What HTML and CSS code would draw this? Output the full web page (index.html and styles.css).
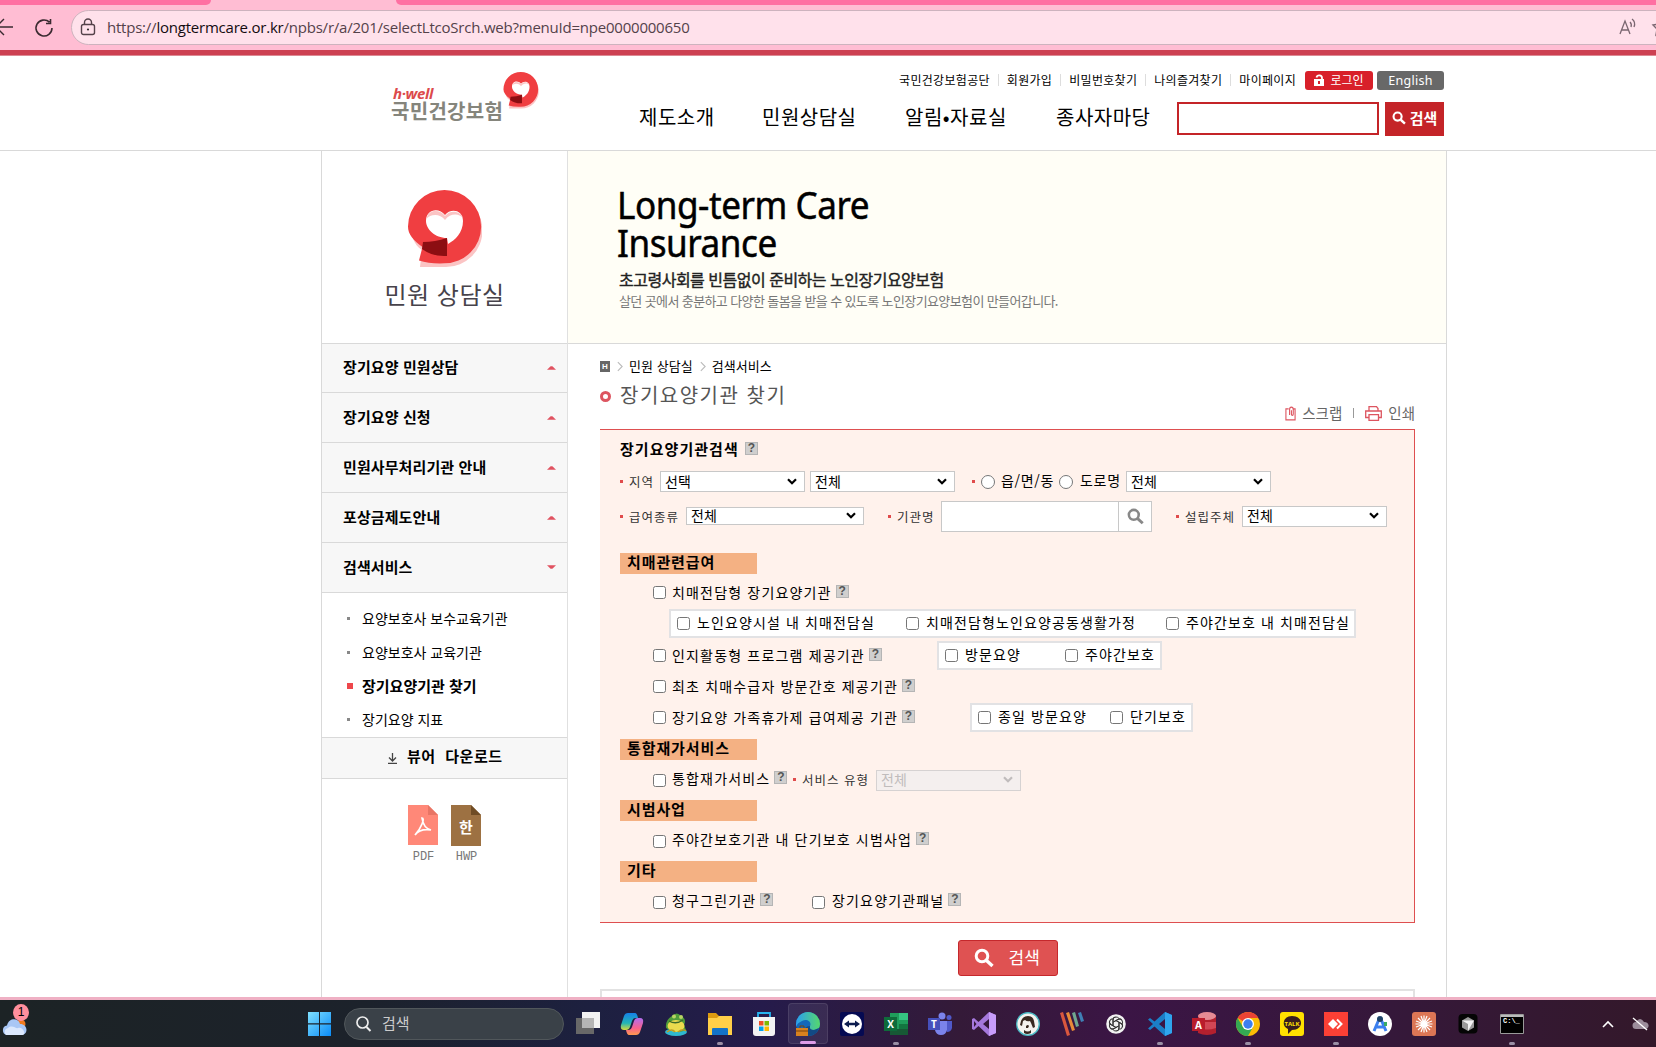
FILE: index.html
```html
<!DOCTYPE html>
<html lang="ko">
<head>
<meta charset="utf-8">
<title>장기요양기관 찾기</title>
<link rel="stylesheet" href="styles.css">
</head>
<body>
<svg class="defs" width="0" height="0">
  <symbol id="hwell" viewBox="0 0 74 78">
    <path d="M38 4a36 36 0 0 1 0 73H12l2-17C5 54 4 46 4 40A36 36 0 0 1 38 4Z" fill="#fbc4c4"/>
    <path d="M36.500 0a36.500 36.500 0 0 1 0 73.300Q22 74 11 70.500L14.500 57C5 50 0 44 0 36.500A36.500 36.500 0 0 1 36.500 0Z" fill="#f03e41"/>
    <path d="M37 25c5-7 18-6 18 6 0 12-8 19-15 23l-1-6C27 48 18 39 18 31c0-12 13-14 19-6Z" fill="#fff"/>
    <path d="M18.500 29C20 19 32 19 37 26c5-7 16-5 18 2-4-5-13-5-18 2-5-7-15-6-18.500-1Z" fill="#fbc4c4"/>
    <path d="M15 52q12 0 24-4v18q-14 1-25-7Z" fill="#8c0e12"/>
  </symbol>
  <symbol id="glass" viewBox="0 0 20 20"><circle cx="8" cy="8" r="5.800" fill="none" stroke="currentColor" stroke-width="3"/><path d="m12.500 12.500 6 5.500" stroke="currentColor" stroke-width="3.400"/></symbol>
  <symbol id="up" viewBox="0 0 10 5"><path d="M0 5 4 1h2l4 4Z" fill="#e05260"/></symbol>
  <symbol id="down" viewBox="0 0 10 5"><path d="M0 0h10L6 4H4Z" fill="#e05260"/></symbol>
  <symbol id="sep" viewBox="0 0 7 12"><path d="m1 1 5 5-5 5" fill="none" stroke="#bbb" stroke-width="1.300"/></symbol>
  <symbol id="chev" viewBox="0 0 10 7"><path d="m1 1.200 4 4 4-4" fill="none" stroke="currentColor" stroke-width="2.200"/></symbol>
</svg>

<div class="browser">
  <div class="tabs"><i class="tab-left"></i><i class="tab-right"></i></div>
  <div class="toolbar">
    <svg class="back" width="14" height="20" viewBox="0 0 14 20"><path d="M13 10H-6M4 2l-8 8 8 8" fill="none" stroke="#3a2a30" stroke-width="1.400"/></svg>
    <svg class="reload" width="20" height="20" viewBox="0 0 20 20"><path d="M18 10a8 8 0 1 1-2.500-5.800M16.500 1v4.500H12" fill="none" stroke="#3a2a30" stroke-width="1.600"/></svg>
    <div class="address">
      <svg class="lock" width="16" height="18" viewBox="0 0 16 18"><rect x="1.500" y="6.500" width="13" height="10" rx="2" fill="none" stroke="#54424a" stroke-width="1.400"/><path d="M4.500 6V4.500a3.500 3.500 0 0 1 7 0V6" fill="none" stroke="#54424a" stroke-width="1.400"/><circle cx="8" cy="11.500" r="1.100" fill="#333"/></svg>
      <span class="url">https://<b>longtermcare.or.kr</b>/npbs/r/a/201/selectLtcoSrch.web?menuId=npe0000000650</span>
      <svg class="aloud" width="18" height="18" viewBox="0 0 18 18"><path d="M1 16 6 3l5 13M2.500 12h7M11 4q2 2 1 5M13 1q4 3 2 8" fill="none" stroke="#7a6670" stroke-width="1.300"/></svg>
      <svg class="star" width="16" height="18" viewBox="0 0 16 18"><path d="m9 1 2.500 5 5.500 1-4 4 1 6-5-3-5 3 1-6-4-4 5.500-1Z" fill="none" stroke="#7a6670" stroke-width="1.400"/></svg>
    </div>
  </div>
</div>

<div class="topline"></div>
<header class="header">
  <div class="header-inner">
    <div class="logo">
      <div class="logo-text"><em>h·well</em><strong>국민건강보험</strong></div>
      <svg width="36" height="37"><use href="#hwell"/></svg>
    </div>
    <div class="header-right">
      <div class="util">
        <a>국민건강보험공단</a><a>회원가입</a><a>비밀번호찾기</a><a>나의즐겨찾기</a><a>마이페이지</a>
        <span class="login"><svg width="10" height="12" viewBox="0 0 10 12"><path d="M0 5h10v7H0Z" fill="#fff"/><path d="M2.500 3.500C3 .5 8 .5 8 4v2" fill="none" stroke="#fff" stroke-width="1.800"/><path d="M4 7h2v3H4z" fill="#d8202a"/></svg>로그인</span>
        <span class="english">English</span>
      </div>
      <div class="gnb">
        <a>제도소개</a><a>민원상담실</a><a>알림•자료실</a><a>종사자마당</a>
        <div class="gsearch"></div>
        <div class="gbutton"><svg width="14" height="14"><use href="#glass"/></svg>검색</div>
      </div>
    </div>
  </div>
</header>

<div class="page">
  <aside class="side">
    <div class="side-head"><svg width="74" height="78"><use href="#hwell"/></svg><h2>민원 상담실</h2></div>
    <ul class="menu">
      <li>장기요양 민원상담<svg width="9" height="5"><use href="#up"/></svg></li>
      <li>장기요양 신청<svg width="9" height="5"><use href="#up"/></svg></li>
      <li>민원사무처리기관 안내<svg width="9" height="5"><use href="#up"/></svg></li>
      <li>포상금제도안내<svg width="9" height="5"><use href="#up"/></svg></li>
      <li>검색서비스<svg width="9" height="5"><use href="#down"/></svg></li>
    </ul>
    <ul class="submenu">
      <li>요양보호사 보수교육기관</li><li>요양보호사 교육기관</li><li class="on">장기요양기관 찾기</li><li>장기요양 지표</li>
    </ul>
    <div class="viewer"><svg width="9" height="11" viewBox="0 0 9 11"><path d="M4.500 0v8M1 4.500l3.500 3.500L8 4.500M0 10.300h9" fill="none" stroke="#444" stroke-width="1.300"/></svg>뷰어 다운로드</div>
    <div class="files">
      <div><svg width="31" height="41" viewBox="0 0 31 41"><path d="M0 0h20l10 10v30H0Z" fill="#ff8878"/><path d="M20 0v10h10Z" fill="#e87565"/><path d="M14 13c3 0 0 9-7 17 3-4 9-6 16-5-4-1-8-5-9-12Z" fill="none" stroke="#fff" stroke-width="1.700"/></svg>PDF</div>
      <div><svg width="31" height="41" viewBox="0 0 31 41"><path d="M0 0h20l10 10v31H0Z" fill="#9d7142"/><path d="M20 0v10h10Z" fill="#6f4c25"/><text x="15" y="28" text-anchor="middle" class="han">한</text></svg>HWP</div>
    </div>
  </aside>

  <main class="main">
    <section class="banner">
      <h1>Long-term Care<br>Insurance</h1>
      <p class="lead">초고령사회를 빈틈없이 준비하는 노인장기요양보험</p>
      <p class="desc">살던 곳에서 충분하고 다양한 돌봄을 받을 수 있도록 노인장기요양보험이 만들어갑니다.</p>
    </section>
    <div class="content">
      <nav class="crumbs"><i class="home">H</i><svg width="6" height="11"><use href="#sep"/></svg><span>민원 상담실</span><svg width="6" height="11"><use href="#sep"/></svg><span>검색서비스</span></nav>
      <h3 class="title">장기요양기관 찾기</h3>
      <div class="tools">
        <svg width="11" height="15" viewBox="0 0 12 15"><path d="M4 2.500H1v12h10v-12H9.500M5 9V3q0-2.500 2-2.500T9 3v5q0 1.500-1 1.500T7 8V4" fill="none" stroke="#dd5560" stroke-width="1.200"/></svg><span>스크랩</span><i></i>
        <svg width="17" height="15" viewBox="0 0 17 15"><path d="M4 5V.7h7.500L13 2.500V5M3.500 11.500H.7V5h15.600v6.500h-2.800M4 8.700h9.500v5.600H4Z" fill="none" stroke="#dd5560" stroke-width="1.300"/></svg><span>인쇄</span>
      </div>

      <form class="panel">
        <div class="panel-title">장기요양기관검색<i class="q">?</i></div>
        <div class="line line-region">
          <label class="key">지역</label><div class="select">선택<svg width="10" height="7"><use href="#chev"/></svg></div><div class="select">전체<svg width="10" height="7"><use href="#chev"/></svg></div>
          <label class="key"></label><input type="radio"><span>읍/면/동</span><input type="radio"><span>도로명</span><div class="select">전체<svg width="10" height="7"><use href="#chev"/></svg></div>
        </div>
        <div class="line line-kind">
          <label class="key">급여종류</label><div class="select low">전체<svg width="10" height="7"><use href="#chev"/></svg></div>
          <label class="key">기관명</label><div class="name-input"><i></i><svg width="17" height="17"><use href="#glass"/></svg></div>
          <label class="key">설립주체</label><div class="select">전체<svg width="10" height="7"><use href="#chev"/></svg></div>
        </div>

        <h4 class="first">치매관련급여</h4>
        <div class="opt opt-a"><input type="checkbox"><span>치매전담형 장기요양기관<i class="q">?</i></span></div>
        <div class="box box-a">
          <input type="checkbox"><span>노인요양시설 내 치매전담실</span><input type="checkbox"><span>치매전담형노인요양공동생활가정</span><input type="checkbox"><span>주야간보호 내 치매전담실</span>
        </div>
        <div class="opt opt-b"><input type="checkbox"><span>인지활동형 프로그램 제공기관<i class="q">?</i></span>
          <div class="box box-b"><input type="checkbox"><span>방문요양</span><input type="checkbox"><span>주야간보호</span></div></div>
        <div class="opt"><input type="checkbox"><span>최초 치매수급자 방문간호 제공기관<i class="q">?</i></span></div>
        <div class="opt opt-c"><input type="checkbox"><span>장기요양 가족휴가제 급여제공 기관<i class="q">?</i></span>
          <div class="box box-c"><input type="checkbox"><span>종일 방문요양</span><input type="checkbox"><span>단기보호</span></div></div>

        <h4 class="second">통합재가서비스</h4>
        <div class="opt tall opt-d"><input type="checkbox"><span>통합재가서비스<i class="q">?</i></span><label class="key">서비스 유형</label><div class="select disabled">전체<svg width="10" height="7"><use href="#chev"/></svg></div></div>
        <h4>시범사업</h4>
        <div class="opt tall"><input type="checkbox"><span>주야간보호기관 내 단기보호 시범사업<i class="q">?</i></span></div>
        <h4>기타</h4>
        <div class="opt tall opt-e"><input type="checkbox"><span>청구그린기관<i class="q">?</i></span><input type="checkbox"><span>장기요양기관패널<i class="q">?</i></span></div>
      </form>

      <div class="submit"><svg width="20" height="20"><use href="#glass"/></svg>검색</div>
      <div class="results"></div>
    </div>
  </main>
</div>

<footer class="taskbar">
  <div class="weather"><svg width="25" height="17" viewBox="0 0 25 17"><circle cx="19" cy="5" r="4.500" fill="#f07a1c"/><path d="M5 16a4.800 4.800 0 0 1 0-9.500C7-2 17-1 18 5c8 0 9 11 1 11Z" fill="#a9c7f5"/><path d="M4 16a4 4 0 0 1 2-7c4-4 8 1 10 0 5-2 9 7 4 7Z" fill="#dbe8fd"/></svg><b>1</b></div>
  <svg class="win" width="23" height="24" viewBox="0 0 23 24"><linearGradient id="wg" x2="1" y2="1"><stop stop-color="#7fe0ff"/><stop offset="1" stop-color="#0a8cf8"/></linearGradient><path d="M0 0h11v11.300H0ZM12 0h11v11.300H12ZM0 12.400h11V24H0ZM12 12.400h11V24H12Z" fill="url(#wg)"/></svg>
  <div class="tsearch"><svg width="15" height="16" viewBox="0 0 15 16"><circle cx="6.500" cy="6.500" r="5.500" fill="none" stroke="#eee" stroke-width="1.700"/><path d="m10.500 11 4 4" stroke="#eee" stroke-width="2"/></svg><span>검색</span></div>
  <div class="apps">
    <span><svg viewBox="0 0 24 24"><path d="M6 0h18v16H6Z" fill="#f2f2f2"/><path d="M0 6h18v16H0Z" fill="#686868"/><path d="M6 6h12v10H6Z" fill="#b5b5b5"/></svg></span>
    <span><svg viewBox="0 0 24 24"><linearGradient id="c1" y2="1" x2="0"><stop stop-color="#1581e8"/><stop offset=".6" stop-color="#23b5b5"/><stop offset="1" stop-color="#d9d93b"/></linearGradient><linearGradient id="c2" x2="0" y2="1"><stop stop-color="#b06df0"/><stop offset=".6" stop-color="#f8618c"/><stop offset="1" stop-color="#ff9a4d"/></linearGradient><path d="M8 1h7q2 0 3 5h-3q-2 0-3 3l-2 6q-1 3-4 3H4q-4 0-3-5L4 4q1-3 4-3Z" fill="url(#c1)"/><path d="M16 23H9q-2 0-3-5h3q2 0 3-3l2-6q1-3 4-3h2q4 0 3 5l-3 9q-1 3-4 3Z" fill="url(#c2)"/></svg></span>
    <span><svg viewBox="0 0 24 24"><ellipse cx="12" cy="20" rx="11" ry="4" fill="#2fb8d0"/><path d="M2 16q-1-8 6-12 5-5 9 0 6 3 3 9l2 5q-10 5-20-2Z" fill="#4f9c3a"/><ellipse cx="12" cy="14" rx="8.500" ry="6" fill="#eadb4e"/><path d="M5 9q7 4 14-1" fill="none" stroke="#3b6a28" stroke-width="1.300"/><circle cx="10" cy="4.500" r="2" fill="#b8d564"/><circle cx="17" cy="5" r="2" fill="#b8d564"/><path d="M3 20q5-4 8 0M14 20q5-4 8-1" fill="none" stroke="#bb9c26" stroke-width="1.500"/></svg></span>
    <span class="run"><svg viewBox="0 0 24 24"><path d="M0 1h8l3 3h12v7H0Z" fill="#dd9b10"/><path d="M0 6h9l2-2h13v19H0Z" fill="#ffcf48"/><path d="M4 23v-6q0-1 1-1h14q1 0 1 1v6Z" fill="#1473c8"/></svg></span>
    <span><svg viewBox="0 0 24 24"><path d="M6 6V1h12v5" fill="none" stroke="#25b4f0" stroke-width="1.800"/><path d="M1 5h22v16q0 3-3 3H4q-3 0-3-3Z" fill="#f3f3f3"/><path d="M7 9h4.500v4.500H7Z" fill="#f04f24"/><path d="M12.500 9H17v4.500h-4.500Z" fill="#7fba00"/><path d="M7 14.500h4.500V19H7Z" fill="#00a2ed"/><path d="M12.500 14.500H17V19h-4.500Z" fill="#ffb900"/></svg></span>
    <span class="active"><svg viewBox="0 0 24 24"><linearGradient id="eg"><stop stop-color="#2b9ef0"/><stop offset="1" stop-color="#55d86c"/></linearGradient><circle cx="12" cy="12" r="12" fill="#1468b8"/><path d="M0 12a12 12 0 0 1 24 0q0 6-7 6c-3 0-4-2-3-4 2-4-3-8-8-5Q1 11 0 15Z" fill="url(#eg)"/><path d="M14 14q-1 4 4 4l5-2q-3 8-11 8Q3 16 14 14Z" fill="#124a84"/><path d="M0 16h12v8H0Z" fill="#d8821e"/><path d="M0 19h12M4 16v-2h4v2" stroke="#7b420a" fill="none"/></svg></span>
    <span><svg viewBox="0 0 24 24"><rect width="24" height="24" rx="2" fill="#050a52"/><circle cx="12" cy="12" r="10" fill="#fff"/><path d="m4 12 5-3.500v2.300h6V8.500L20 12l-5 3.500v-2.300H9v2.300Z" fill="#0b1b4e"/></svg></span>
    <span class="run"><svg viewBox="0 0 24 24"><path d="M6 1h18v22H6Z" fill="#1f9d5b"/><path d="M15 1h9v7h-9Z" fill="#35c481"/><path d="M15 12h9v5h-9Z" fill="#137540"/><path d="M6 17h18v6H6Z" fill="#175935"/><path d="M0 5h13v14H0Z" fill="#0e6b3a"/><text x="6.500" y="16" class="ltr">X</text></svg></span>
    <span><svg viewBox="0 0 24 24"><circle cx="14" cy="4" r="3.500" fill="#7b83eb"/><circle cx="21" cy="5.500" r="2.500" fill="#5059c9"/><path d="M7 9h12v9q-1 5-6 5t-6-5Z" fill="#7b83eb"/><path d="M19 9h5v7q-1 4-5 4Z" fill="#5059c9"/><path d="M0 6h12v12H0Z" fill="#4650bb"/><text x="6" y="16" class="ltr">T</text></svg></span>
    <span><svg viewBox="0 0 24 24"><path fill-rule="evenodd" d="m17 0 7 3v18l-7 3L6.500 14 2 18l-2-1V7l2-1 4.500 4ZM17 7l-6 5 6 5ZM2 9v6l2.500-3Z" fill="#a578dc"/><path d="M17 0v24l7-3V3Z" fill="#c79cfa"/></svg></span>
    <span><svg viewBox="0 0 24 24"><circle cx="12" cy="12" r="11.300" fill="#f5f2ee" stroke="#4bb9c4" stroke-width="1.400"/><path d="M5 9q2-5 7-5 5 0 6 5l1 6-2 1-2-5-1-2q-3 1-5-1l-2 1-1 5-2-1Z" fill="#382820"/><path d="M10 14q2-2 3 0l-1 2h-2ZM8 18q4 3 7 0v3q-4 2-7 0Z" fill="#382820"/></svg></span>
    <span><svg viewBox="0 0 24 24"><path d="m0 1 3-1 7 23-3 1Z" fill="#da573e"/><path d="m6 1 3-1 6 18-3 1Z" fill="#e98a38"/><path d="m12 1 3-1 4 14-3 1Z" fill="#6fa78f"/><path d="m18 1 3-1 3 9-3 1Z" fill="#3f80b5"/></svg></span>
    <span><svg viewBox="0 0 24 24"><circle cx="12" cy="12" r="9.800" fill="#f1f1f1"/><g fill="none" stroke="#333" stroke-width="1"><path id="k" d="M9 13.500V8q0-3 3-3 2 0 3 1.500M9.500 10l4.500-2.600q2.300-1.200 3.700.6"/><use href="#k" transform="rotate(60 12 12)"/><use href="#k" transform="rotate(120 12 12)"/><use href="#k" transform="rotate(180 12 12)"/><use href="#k" transform="rotate(240 12 12)"/><use href="#k" transform="rotate(300 12 12)"/></g></svg></span>
    <span class="run"><svg viewBox="0 0 24 24"><path fill-rule="evenodd" d="m17 0 7 3v18l-7 3L6.500 14.500 2 18l-2-1.500L5 12 0 7.500 2 6l4.500 3.500ZM17 7l-6 5 6 5Z" fill="#1b7fc7"/><path d="m17 0 7 3v18l-7 3Z" fill="#2fa5ee"/></svg></span>
    <span><svg viewBox="0 0 24 24"><path d="M6 3v18q9 4 18 0V3Z" fill="#b3202e"/><path d="M6 10h18v6q-9 3-18 0Z" fill="#d14655"/><ellipse cx="15" cy="4" rx="9" ry="4" fill="#e58a94"/><path d="M0 6h13v13H0Z" fill="#b91c2c"/><text x="6.500" y="16.500" class="ltr">A</text></svg></span>
    <span class="run"><svg viewBox="0 0 24 24"><circle cx="12" cy="12" r="12" fill="#fbbc05"/><path d="M1.600 6A12 12 0 0 1 22.400 6H12v6Z" fill="#ea4335"/><path d="M1.600 6A12 12 0 0 0 12 24l5-9H7Z" fill="#34a853"/><circle cx="12" cy="12" r="6" fill="#fff"/><circle cx="12" cy="12" r="4.700" fill="#3c7ff0"/></svg></span>
    <span><svg viewBox="0 0 24 24"><rect width="24" height="24" rx="3" fill="#ffe100"/><path d="M12 4c12 0 12 14 0 14l-4 4V17C1 14 3 4 12 4Z" fill="#371d1e"/><text x="12" y="13.500" class="talk">TALK</text></svg></span>
    <span class="run"><svg viewBox="0 0 24 24"><path d="M0 0h24v24H0Z" fill="#fb4035"/><path d="m9 7 5 5-5 5-5-5Z" fill="#fff"/><path d="m13 7.500 4.500 4.500-4.500 4.500" fill="none" stroke="#fff" stroke-width="2"/></svg></span>
    <span><svg viewBox="0 0 24 24"><circle cx="12" cy="12" r="12" fill="#fff"/><path d="m12 5-6 14M12 5l6 14M7 15h10" stroke="#3c80ef" stroke-width="3" fill="none"/><circle cx="12" cy="7" r="3" fill="#1f4467"/><path d="M16 10h3v4h-3Z" fill="#3aab65"/></svg></span>
    <span><svg viewBox="0 0 24 24"><rect width="24" height="24" rx="3" fill="#dc7655"/><path d="M12 3.500v17M3.500 12h17M6 6l12 12M18 6 6 18M9 4l6 16M15 4 9 20M4 9l16 6M4 15l16-6" stroke="#fff" stroke-width="1.200"/></svg></span>
    <span><svg viewBox="0 0 24 24"><rect x="2.500" y="2" width="19" height="19.500" rx="4" fill="#050505"/><path d="m12 5 6 3.500v7L12 19l-6-3.500v-7Z" fill="#9a9a9a"/><path d="M6 8.500h12L12 19v-7Z" fill="#f2f2f2"/></svg></span>
    <span class="run"><svg viewBox="0 0 24 24"><path d="M.5 2.500h23v19H.5Z" fill="#000" stroke="#999"/><path d="M1 3h22v2H1Z" fill="#bbb"/><text x="3" y="11" class="cmd">C:\_</text></svg></span>
  </div>
  <div class="tray"><svg width="12" height="8" viewBox="0 0 12 8"><path d="m1 7 5-5 5 5" fill="none" stroke="#fff" stroke-width="1.600"/></svg><svg width="17" height="14" viewBox="0 0 17 14"><path d="M4 12a3.500 3.500 0 0 1 0-7q4-6 8 0c6 0 6 7 1 7Z" fill="#9c8d9b"/><path d="m1 1 14 12" stroke="#fff" stroke-width="1.300"/></svg></div>
</footer>
</body>
</html>
```

FILE: styles.css
```css
*, *::before { box-sizing: border-box; }
body { margin: 0; width: 1656px; height: 1047px; overflow: hidden; display: flex; flex-direction: column; background: #fff; color: #000; font: 14px/1.2 "Noto Sans CJK KR", sans-serif; }
ul, h1, h2, h3, h4, p { margin: 0; padding: 0; list-style: none; font-weight: normal; }
i, em { font-style: normal; }
svg { display: block; flex: none; overflow: visible; }
.defs { position: absolute; }

/* browser chrome */
.browser { flex: none; height: 50px; background: #ffbdd3; overflow: hidden; }
.tabs { height: 5px; display: flex; justify-content: space-between; }
.tabs i { background: #ff6fa2; height: 5px; }
.tab-left { width: 211px; border-bottom-right-radius: 5px; }
.tab-right { width: 1260px; border-bottom-left-radius: 5px; }
.toolbar { display: flex; align-items: center; height: 45px; }
.back { margin-top: -1px; }
.reload { margin-left: 20px; }
.address { margin: 0 -20px 0 17px; flex: 1; height: 35px; display: flex; align-items: center; border: 1px solid #cdb3be; border-radius: 18px; background: #ffe1eb; padding: 0 0 1px 8px; }
.lock { margin-top: -1px; }
.url { margin-left: 11px; font: 15px/20px "Open Sans", sans-serif; letter-spacing: -0.22px; color: #54424a; white-space: nowrap; }
.url b { font-weight: normal; color: #140c10; }
.aloud { margin-left: auto; }
.star { margin: 0 7px 0 15px; }

/* header */
.topline { flex: none; height: 6px; background: #cd4052; border-bottom: 1px solid #dd8a94; }
.header { flex: none; height: 95px; border-bottom: 1px solid #d9d9d9; }
.header-inner { display: flex; width: 1053px; margin-left: 391px; }
.logo { display: flex; padding-top: 16px; width: 248px; }
.logo-text { width: 112px; padding-top: 13px; display: flex; flex-direction: column; }
.logo-text em { font: italic bold 15px/16px "Open Sans", sans-serif; letter-spacing: -.4px; color: #dc4a4c; padding-left: 2px; }
.logo-text strong { font-size: 20px; line-height: 19px; letter-spacing: 0.3px; color: #85857c; white-space: nowrap; }
.header-right { flex: 1; padding-top: 15px; }
.util { display: flex; justify-content: flex-end; height: 19px; align-items: center; font-size: 12px; white-space: nowrap; }
.util a { padding: 0 8px; letter-spacing: .3px; line-height: 12px; margin-top: -2px; border-left: 1px solid #ddd; }
.util a:first-child { border: 0; }
.login, .english { height: 19px; border-radius: 3px; color: #fff; display: flex; align-items: center; justify-content: center; padding-bottom: 1px; }
.login { width: 68px; background: #d8202a; gap: 6px; margin-left: 1px; }
.english { width: 67px; background: #686868; margin-left: 4px; font: 12.500px "Noto Sans", sans-serif; letter-spacing: .3px; }
.gnb { display: grid; grid-template-columns: 123px 143px 151px 121px 208px 59px; height: 34px; margin-top: 12px; align-items: center; font-size: 20px; white-space: nowrap; }
.gnb a { letter-spacing: .5px; margin-top: -5px; }
.gsearch { height: 33px; width: 202px; border: 2px solid #c42428; align-self: start; }
.gbutton { height: 34px; background: #c42428; color: #fff; font-size: 15px; font-weight: bold; display: flex; align-items: center; justify-content: center; gap: 4px; padding-bottom: 2px; }

/* page frame */
.page { flex: 1; min-height: 0; overflow: hidden; display: flex; width: 1126px; margin-left: 321px; border: solid #d9d9d9; border-width: 0 1px; }
.side { width: 246px; border-right: 1px solid #e0e0e0; }
.side-head { height: 193px; border-bottom: 1px solid #d9d9d9; padding-top: 39px; display: flex; flex-direction: column; align-items: center; }
.side-head h2 { font-size: 24px; line-height: 30px; letter-spacing: .5px; color: #47434b; margin-top: 11px; }
.menu li { height: 50px; background: #f7f7f7; border-bottom: 1px solid #d9d9d9; padding: 0 11px 2px 21px; display: flex; align-items: center; justify-content: space-between; font-size: 15px; font-weight: bold; letter-spacing: .1px; }
.menu li:first-child { height: 49px; }
.menu svg { margin-top: 1px; }
.submenu { height: 144px; padding-top: 9px; }
.submenu li { height: 33.500px; line-height: 33px; display: flex; align-items: center; padding-left: 25px; }
.submenu li::before { content: ""; width: 3px; height: 3px; background: #888; margin-right: 12px; }
.submenu .on { font-size: 15px; font-weight: bold; }
.submenu .on::before { width: 6px; height: 6px; background: #ee474b; margin-right: 9px; }
.viewer { height: 42px; background: #f7f7f7; border: solid #d9d9d9; border-width: 1px 0; display: flex; align-items: center; padding: 0 0 4px 66px; gap: 10px; font-size: 15px; font-weight: bold; letter-spacing: .5px; word-spacing: 5px; }
.viewer svg { margin-top: 5px; }
.files { display: flex; gap: 12px; padding: 26px 0 0 86px; font: 12px/15px "Liberation Mono", monospace; color: #777; text-align: center; }
.files svg { margin-bottom: 4px; }
.han { font: bold 15px "Noto Sans CJK KR", sans-serif; fill: #fff; }

/* banner */
.main { flex: 1; }
.banner { height: 193px; background: #fffef6; border-bottom: 1px solid #d9d9d9; padding: 34px 0 0 49px; white-space: nowrap; }
.banner h1 { font: 38px/38px "Noto Sans", sans-serif; letter-spacing: -.5px; -webkit-text-stroke: .5px #000; transform: scaleX(.924); transform-origin: left; }
.lead { font-size: 16px; line-height: 22px; margin-top: 7px; letter-spacing: -.5px; -webkit-text-stroke: .4px #222; color: #222; padding-left: 2px; }
.desc { font-size: 13px; line-height: 20px; margin-top: 1px; letter-spacing: -.61px; color: #777; padding-left: 2px; }

/* content */
.content { padding: 14px 31px 0 32px; }
.crumbs { display: flex; align-items: center; height: 16px; font-size: 13px; letter-spacing: .05px; }
.crumbs svg { margin: 0 6px 0 7px; }
.home { width: 10px; height: 11px; background: #666; color: #fff; font: bold 8px/11px "Liberation Sans", sans-serif; text-align: center; }
.title { display: flex; align-items: center; height: 30px; margin-top: 6px; font-size: 20px; letter-spacing: 1.500px; color: #555; }
.title::before { content: ""; width: 11px; height: 11px; border: 3.500px solid #dd5560; border-radius: 50%; margin: 2px 9px 0 0; }
.tools { display: flex; justify-content: flex-end; align-items: center; height: 18px; font-size: 14.500px; color: #666; margin-top: -6px; margin-bottom: 7px; }
.tools span { margin: -1px 0 0 6px; }
.tools i { width: 1px; height: 10px; background: #999; margin: 0 11px 0 11px; }

.panel { height: 494px; background: #fff2ec; border: solid #de4f50; border-width: 1px 1px 1px 0; padding-left: 20px; font-size: 14px; white-space: nowrap; }
.panel-title { height: 38px; display: flex; align-items: center; font-size: 15px; font-weight: bold; letter-spacing: 1.050px; padding-bottom: 1px; }
.q { display: inline-block; width: 13px; height: 13px; background: #d0cfce; border: 1px solid #b5b5b5; color: #555; font: bold 12px/11px "Liberation Sans", sans-serif; letter-spacing: 0; text-align: center; margin-left: 4px; }
.panel-title .q { margin: -1px 0 0 6px; }
input { margin: 0; width: 13px; height: 13px; }
input[type="radio"] { width: 14px; height: 14px; }
.select { height: 21px; width: 145px; padding: 0 7px 1px 4px; border: 1px solid #c8c8c8; background-color: #fff; display: flex; align-items: center; justify-content: space-between; letter-spacing: 0; line-height: 17px; }
.select.low { height: 18px; width: 178px; }
.select.low, .line-kind .select { margin-top: -1px; }
.disabled { background: #f4efee; border-color: #d6d2d2; color: #c0bcbc; }
.line { display: grid; align-items: center; }
.line span { letter-spacing: .7px; margin-top: -2px; }
.key { display: flex; align-items: center; font-size: 12.500px; letter-spacing: 1px; color: #333; margin-top: -1px; }
.key::before { content: ""; width: 3px; height: 3px; background: #e04b4b; margin-right: 6px; }
.line-region { height: 27px; grid-template-columns: 40px 150px 162px 9px 20px 58px 21px 46px 145px; }
.line-kind { height: 43px; grid-template-columns: 66px 202px 53px 235px 66px 145px; }
.name-input { width: 211px; height: 31px; background: #fff; border: 1px solid #c8c8c8; display: flex; align-items: center; color: #888; }
.name-input i { width: 177px; height: 29px; border-right: 1px solid #c8c8c8; margin-right: 8px; }
h4 { width: 137px; height: 21px; background: #f4b183; padding-left: 7px; font-size: 15px; line-height: 18px; font-weight: bold; letter-spacing: .9px; }
.first { margin-top: 15px; }
.second { margin-top: 6px; }
.opt { height: 31px; display: grid; grid-template-columns: 19px 1fr; align-items: center; padding-left: 33px; letter-spacing: 1.170px; }
.opt > span { margin-top: -1px; display: flex; align-items: center; }
.opt .q { margin-top: -1px; }
.opt-a { height: 35px; padding-top: 2px; }
.opt.tall { height: 40px; }
.opt.tall > span { margin-top: -3px; }
.opt-b { grid-template-columns: 19px 265px 225px; }
.opt-c { grid-template-columns: 19px 298px 223px; }
.opt-d { grid-template-columns: 19px 121px 83px 145px; }
.opt-e { grid-template-columns: 19px 140px 20px 1fr; }
.box { display: grid; align-items: center; height: 29px; border: 2px solid #e2e2e4; background: #fff; padding-left: 6px; letter-spacing: 1.120px; }
.box span { margin-top: -2px; }
.box-a { width: 687px; margin: 0 0 2px 49px; grid-template-columns: 20px 209px 20px 240px 20px 1fr; }
.box-b { grid-template-columns: 20px 100px 20px 1fr; }
.box-c { grid-template-columns: 20px 112px 20px 1fr; }
.submit { width: 100px; height: 36px; margin: 17px auto 0; background: #df5252; border: 1px solid #c5282c; border-radius: 3px; color: #fff; display: flex; align-items: center; gap: 15px; padding: 0 0 1px 15px; font-size: 17px; }
.results { height: 60px; margin-top: 13px; border: 2px solid #e2e2e2; }

/* taskbar */
.taskbar { flex: none; height: 50px; border-top: 3px solid #efb0c4; display: flex; align-items: center; background: linear-gradient(90deg, #1c2325 0%, #1c222b 22%, #1d2040 36%, #251b4b 46%, #341a38 58%, #3b1545 68%, #35183a 84%, #33182a 100%); }
.weather { position: relative; width: 27px; padding: 7px 0 0 2px; }
.weather b { position: absolute; left: 13px; top: -8px; width: 16px; height: 17px; border-radius: 50%; background: #ff8f9d; color: #000; font: 12px/17px "Liberation Sans", sans-serif; text-align: center; }
.win { margin-left: 281px; }
.tsearch { margin-left: 13px; width: 220px; height: 32px; border: 1px solid #51575b; border-radius: 16px; background: #3a4148; color: #ccc; display: flex; align-items: center; gap: 11px; padding-left: 11px; font-size: 15px; }
.tsearch span { margin-top: -2px; }
.apps { display: flex; margin-left: 2px; }
.apps span { width: 44px; height: 41px; display: flex; align-items: center; justify-content: center; position: relative; }
.apps svg { width: 24px; height: 24px; }
.apps .active { background: #ffffff14; box-shadow: inset 0 0 0 1px #ffffff18; border-radius: 4px; width: 40px; margin: 0 2px; }
.run::after, .active::after { content: ""; position: absolute; bottom: -1px; width: 6px; height: 3px; border-radius: 2px; background: #9b8fa5; }
.active::after { width: 16px; background: #dd9ce8; bottom: 0; }
.ltr { font: bold 10px "Open Sans", sans-serif; fill: #fff; text-anchor: middle; }
.talk { font: bold 6px "Open Sans", sans-serif; fill: #ffe100; text-anchor: middle; }
.cmd { font: bold 7px "Liberation Mono", monospace; fill: #fff; }
.tray { display: flex; align-items: center; gap: 18px; margin-left: 68px; }
```
